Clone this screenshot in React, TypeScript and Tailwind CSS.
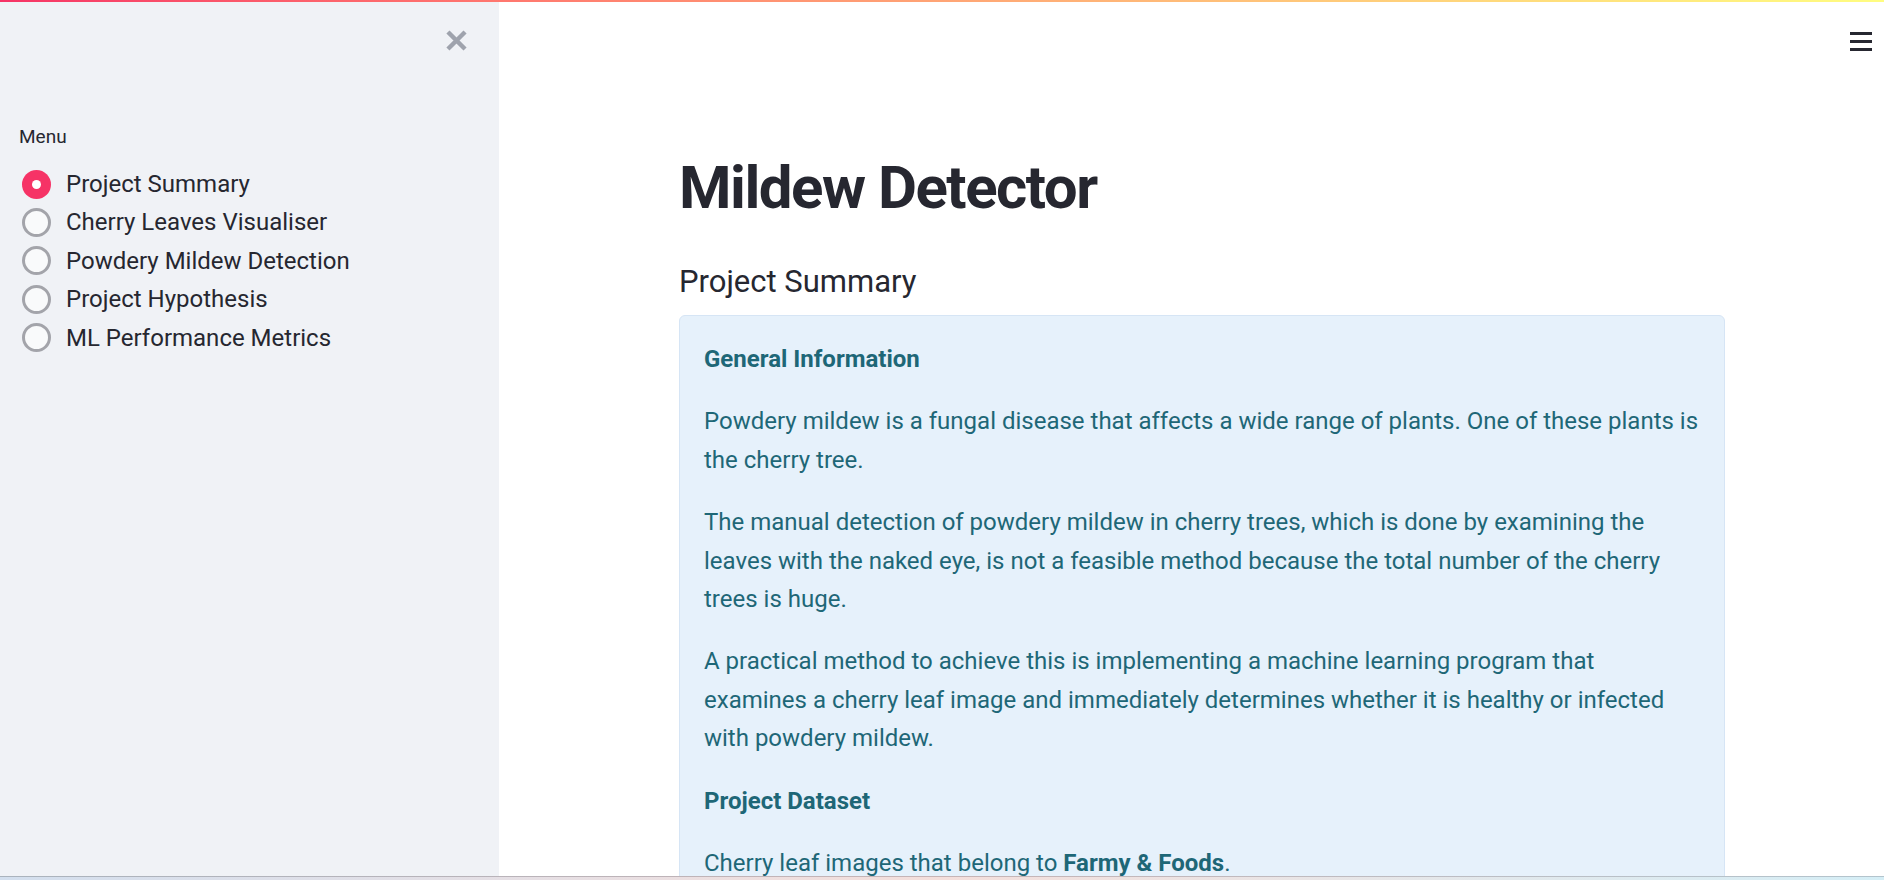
import React from 'react'

const menuItems = [
  'Project Summary',
  'Cherry Leaves Visualiser',
  'Powdery Mildew Detection',
  'Project Hypothesis',
  'ML Performance Metrics',
]

function Radio({ checked }: { checked: boolean }) {
  if (checked) {
    return (
      <span className="flex h-[29px] w-[29px] shrink-0 items-center justify-center rounded-full bg-[#f63366]">
        <span className="h-[9px] w-[9px] rounded-full bg-white" />
      </span>
    )
  }
  return <span className="h-[29px] w-[29px] shrink-0 rounded-full border-[3px] border-[#a3a4aa] bg-[#f9fafb]" />
}

export default function App() {
  return (
    <div className="relative h-[880px] w-[1884px] overflow-hidden bg-white font-['Roboto',sans-serif] text-[#262730]">
      {/* decoration bar */}
      <div className="absolute inset-x-0 top-0 z-10 h-[2px] bg-gradient-to-r from-[#f63366] to-[#fffd80]" />

      <div className="flex h-[876px]">
        {/* Sidebar */}
        <aside className="w-[499px] shrink-0 bg-[#f0f2f6] px-[19px]">
          <div className="flex justify-end pr-[13px] pt-[30px]">
            <svg width="21" height="21" viewBox="0 0 21 21" className="text-[#9fa3ad]">
              <path d="M3.5 3.5L17.5 17.5M17.5 3.5L3.5 17.5" stroke="currentColor" strokeWidth="4.4" strokeLinecap="square" />
            </svg>
          </div>

          <div className="mt-[74px] text-[19px] leading-[24px]">Menu</div>

          <div className="mt-[16px] flex flex-col">
            {menuItems.map((item, i) => (
              <div key={item} className="flex h-[38.4px] items-center pl-[3px]">
                <Radio checked={i === 0} />
                <span className="ml-[15px] text-[24px] leading-[38.4px]">{item}</span>
              </div>
            ))}
          </div>
        </aside>

        {/* Main */}
        <main className="relative flex-1 overflow-hidden">
          <div className="absolute right-[12px] top-[32px] flex w-[22px] flex-col gap-[5px]">
            <span className="h-[3px] bg-[#262730]" />
            <span className="h-[3px] bg-[#262730]" />
            <span className="h-[3px] bg-[#262730]" />
          </div>

          <div className="w-[1226px] pl-[180px]">
            <h1 className="pt-[152px] text-[60px] font-bold leading-[72px] tracking-[-1.5px]">Mildew Detector</h1>
            <h3 className="mt-[40px] text-[31px] leading-[36px]">Project Summary</h3>

            <div className="mt-[15px] rounded-[6px] border border-[#d6e5f5] bg-[#e6f1fb] px-[24px] pt-[24px] text-[24px] leading-[38.4px] text-[#1e6777] whitespace-nowrap">
              <p className="mb-[24px] font-bold">General Information</p>
              <p className="mb-[24px]">
                Powdery mildew is a fungal disease that affects a wide range of plants. One of these plants is
                <br />
                the cherry tree.
              </p>
              <p className="mb-[24px]">
                The manual detection of powdery mildew in cherry trees, which is done by examining the
                <br />
                leaves with the naked eye, is not a feasible method because the total number of the cherry
                <br />
                trees is huge.
              </p>
              <p className="mb-[24px]">
                A practical method to achieve this is implementing a machine learning program that
                <br />
                examines a cherry leaf image and immediately determines whether it is healthy or infected
                <br />
                with powdery mildew.
              </p>
              <p className="mb-[24px] font-bold">Project Dataset</p>
              <p className="mb-[24px]">
                Cherry leaf images that belong to <strong>Farmy &amp; Foods</strong>.
              </p>
              <p className="mb-[24px]">&nbsp;</p>
            </div>
          </div>
        </main>
      </div>

      {/* window edge */}
      <div className="h-[1px] bg-gradient-to-r from-[#aab3bd] via-[#c6b4b6] to-[#b3c4cd]" />
      <div className="h-[3px] bg-gradient-to-r from-[#d3dfee] via-[#f4dfdc] to-[#d5eef6]" />
    </div>
  )
}
